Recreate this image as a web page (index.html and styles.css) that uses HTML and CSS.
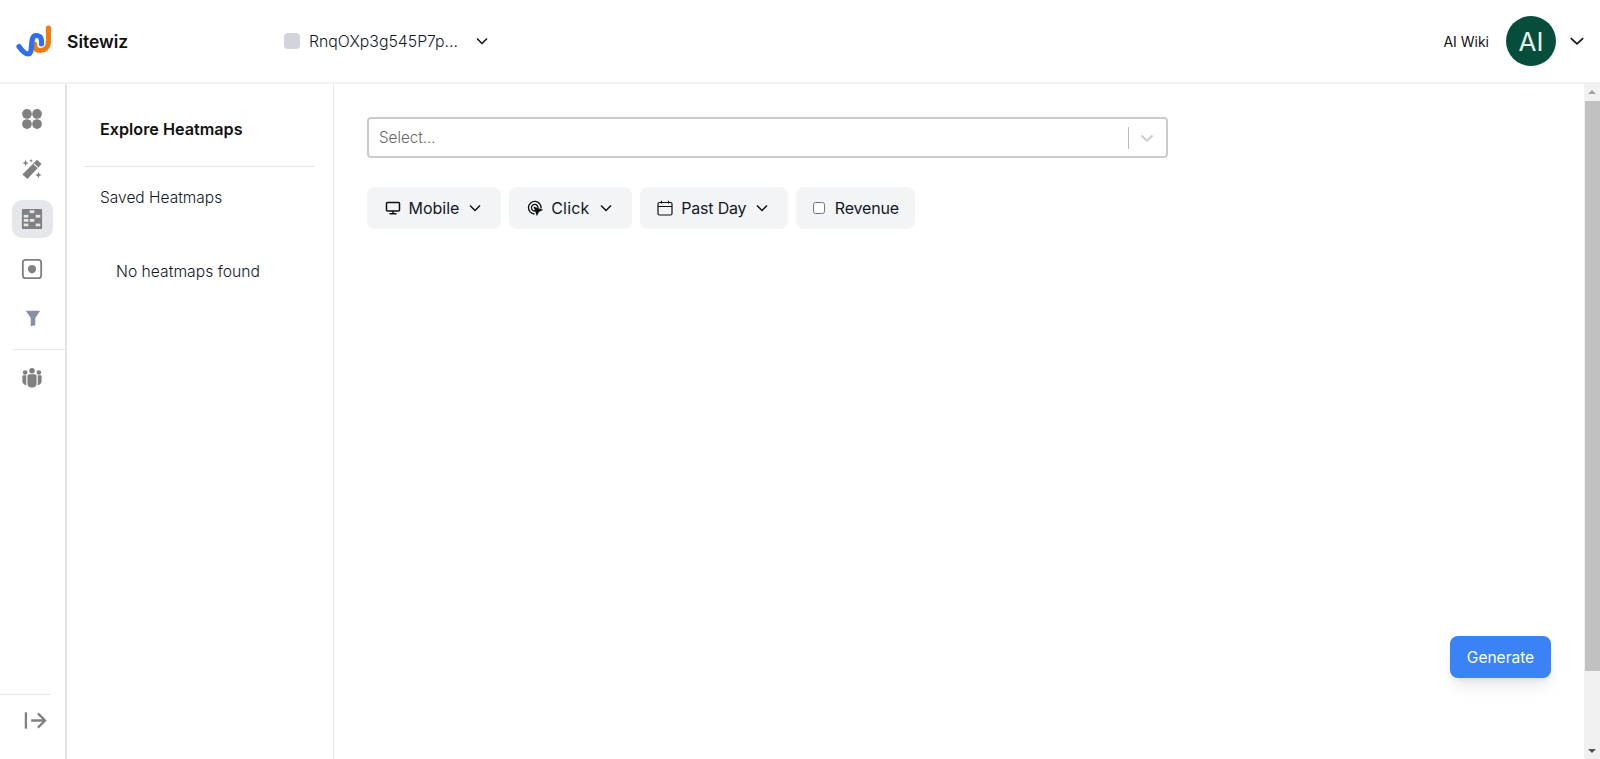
FILE: index.html
```html
<!DOCTYPE html>
<html lang="en">
<head>
<meta charset="utf-8">
<title>Sitewiz</title>
<link rel="stylesheet" href="styles.css">
</head>
<body>
<header class="topbar">
  <div class="brand">
    <svg class="logo" width="36" height="36" viewBox="0 0 36 36" fill="none" stroke-linecap="round">
      <path d="M19.500 21C19.500 26 22 27.500 25 27.500C32 27.500 33.500 23 33.500 17V5" stroke="#f07a0c" stroke-width="5.200"/>
      <path d="M4 23.500C6.500 27 9.500 31 13 31C19 31 14 12.500 21 12.500C26 12.500 27 16 26.500 21" stroke="#2f6fee" stroke-width="5.200"/>
    </svg>
    <span class="brand-name">Sitewiz</span>
  </div>
  <div class="site-picker">
    <span class="site-swatch"></span>
    <span class="site-name">RnqOXp3g545P7p...</span>
    <svg class="chev-dark" width="16" height="16" viewBox="0 0 16 16"><path d="M3 5.500 8 10.500 13 5.500" fill="none" stroke="#111" stroke-width="1.500"/></svg>
  </div>
  <div class="account">
    <span class="wiki">AI Wiki</span>
    <span class="avatar">AI</span>
    <svg class="chev-dark" width="18" height="18" viewBox="0 0 16 16"><path d="M2.500 5.500 8 10.500 13.500 5.500" fill="none" stroke="#111" stroke-width="1.500"/></svg>
  </div>
</header>
<div class="body-row">
  <nav class="rail">
    <div class="rail-group">
      <span class="rail-item">
        <svg width="24" height="24" viewBox="0 0 24 24" fill="#808080"><circle cx="6.500" cy="6.500" r="5.300"/><circle cx="17.500" cy="6.500" r="5.300"/><circle cx="6.500" cy="17.500" r="5.300"/><circle cx="17.500" cy="17.500" r="5.300"/></svg>
      </span>
      <span class="rail-item">
        <svg width="24" height="24" viewBox="0 0 24 24" fill="#808080"><path d="M17.500 2 22.500 6.500 7 23 1.500 18Z"/><path d="M14 6.500 18.500 10.500" stroke="#fff" stroke-width="1.200"/><path d="M5 2 6 4.500 8.500 5.500 6 6.500 5 9 4 6.500 1.500 5.500 4 4.500ZM19 15 20 17.500 22.500 18.500 20 19.500 19 22 18 19.500 15.500 18.500 18 17.500ZM11 1 11.700 2.500 13 3 11.700 3.500 11 5 10.300 3.500 9 3 10.300 2.500Z"/></svg>
      </span>
      <span class="rail-item rail-active">
        <svg width="24" height="24" viewBox="0 0 24 24"><rect x="1" y="1" width="22" height="22" rx="1" fill="#808080"/><g fill="#e5e7eb"><rect x="9.500" y="2.500" width="5" height="3"/><rect x="3" y="7.500" width="5" height="3"/><rect x="16" y="7.500" width="5" height="3"/><rect x="3" y="12" width="5" height="3"/><rect x="9.500" y="12" width="5" height="3"/><rect x="3" y="17" width="5" height="3"/><rect x="16" y="17" width="5" height="3"/></g></svg>
      </span>
      <span class="rail-item">
        <svg width="24" height="24" viewBox="0 0 24 24"><rect x="2" y="2" width="20" height="20" rx="3" fill="none" stroke="#808080" stroke-width="2"/><circle cx="12" cy="12" r="4.500" fill="#808080"/></svg>
      </span>
      <span class="rail-item rail-centered">
        <svg width="24" height="24" viewBox="0 0 24 24" fill="#8791a3"><path d="M5 4H19Q20 4 19.300 5L14.500 12V20L9.500 21V12L4.700 5Q4 4 5 4Z"/></svg>
      </span>
    </div>
    <div class="rail-rule"></div>
    <span class="rail-item">
      <svg width="24" height="24" viewBox="0 0 24 24" fill="#808080"><circle cx="12" cy="4" r="3"/><circle cx="4.500" cy="6" r="2.500"/><circle cx="19.500" cy="6" r="2.500"/><path d="M7 10Q7 8 9 8H15Q17 8 17 10V18Q17 22.500 12 22.500Q7 22.500 7 18Z"/><path d="M1.500 10Q1.500 9 2.500 9H5.700V18.500Q5.700 19.500 6 20.300Q1.500 19 1.500 15ZM22.500 10Q22.500 9 21.500 9H18.300V18.500Q18.300 19.500 18 20.300Q22.500 19 22.500 15Z"/></svg>
    </span>
    <div class="rail-foot">
      <div class="rail-rule"></div>
      <svg class="expand" width="23" height="23" viewBox="0 0 24 24" fill="none" stroke="#808080" stroke-width="2.400"><path d="M2 3.500V20.500"/><path d="M7.500 12H22M14.500 4.500 22 12 14.500 19.500"/></svg>
    </div>
  </nav>
  <aside class="panel">
    <div class="panel-title">Explore Heatmaps</div>
    <div class="panel-link">Saved Heatmaps</div>
    <div class="panel-empty">No heatmaps found</div>
  </aside>
  <main class="main">
    <div class="select-box">
      <span class="select-placeholder">Select...</span>
      <span class="select-sep"></span>
      <svg class="select-chev" width="20" height="20" viewBox="0 0 20 20"><path d="M4.500 7.500 10 12.800 15.500 7.500" fill="none" stroke="#ccc" stroke-width="2"/></svg>
    </div>
    <div class="filters">
      <button class="filter">
        <svg width="16" height="16" viewBox="0 0 16 16" fill="none" stroke="#111" stroke-width="1.500"><rect x="1.500" y="2.500" width="13" height="8.500" rx="1"/><path d="M8 11V13.500M4.500 13.800H11.500"/></svg>
        <span>Mobile</span>
        <svg width="16" height="16" viewBox="0 0 16 16"><path d="M3 5.500 8 10.500 13 5.500" fill="none" stroke="#111" stroke-width="1.500"/></svg>
      </button>
      <button class="filter filter-click">
        <svg width="16" height="16" viewBox="0 0 16 16" fill="none" stroke="#111" stroke-width="1.300"><path d="M14 8.500A6.300 6.300 0 1 0 7.500 14"/><path d="M11 8A3.300 3.300 0 1 0 8 11"/><path d="M7.500 7.500 14.500 10 11.500 11.500 10 14.500Z" fill="#111"/></svg>
        <span class="wide">Click</span>
        <svg width="16" height="16" viewBox="0 0 16 16"><path d="M3 5.500 8 10.500 13 5.500" fill="none" stroke="#111" stroke-width="1.500"/></svg>
      </button>
      <button class="filter">
        <svg width="16" height="16" viewBox="0 0 16 16" fill="none" stroke="#111" stroke-width="1.200"><rect x="1" y="2.500" width="14" height="12.500" rx="1.500"/><path d="M1 6.500H15M4.500 .8V3.500M11.500 .8V3.500"/></svg>
        <span class="tight">Past Day</span>
        <svg width="16" height="16" viewBox="0 0 16 16"><path d="M3 5.500 8 10.500 13 5.500" fill="none" stroke="#111" stroke-width="1.500"/></svg>
      </button>
      <button class="filter filter-check">
        <span class="checkbox"></span>
        <span class="tight">Revenue</span>
      </button>
    </div>
    <button class="generate">Generate</button>
  </main>
  <div class="scrollbar">
    <span class="arrow-up"></span>
    <span class="thumb"></span>
    <span class="arrow-down"></span>
  </div>
</div>
</body>
</html>
```
FILE: styles.css
```css
* { box-sizing: border-box; }
html, body { margin: 0; height: 100%; overflow: hidden; }
body {
  display: flex;
  flex-direction: column;
  height: 759px;
  background: #fff;
  color: #111827;
  font-family: "Inter", "Liberation Sans", sans-serif;
}
.topbar {
  height: 84px;
  flex: none;
  display: flex;
  align-items: center;
  border-bottom: 2px solid #f0f1f3;
  padding: 0 14px 0 15px;
}
.brand { width: 269px; display: flex; align-items: center; gap: 16px; }
.logo { flex: none; }
.brand-name { font-size: 17.500px; font-weight: 600; color: #111; }
.site-picker { display: flex; align-items: center; }
.site-swatch { width: 16px; height: 16px; border-radius: 4px; background: #d1d5db; margin-right: 9px; }
.site-name { font-size: 15.800px; font-weight: 300; color: #111827; width: 165px; white-space: nowrap; }
.account { margin-left: auto; display: flex; align-items: center; }
.wiki { font-size: 14px; color: #111; margin-right: 17px; }
.avatar {
  width: 50px; height: 50px; border-radius: 50%;
  background: #064e3b; color: #e5f0ec;
  display: flex; align-items: center; justify-content: center;
  font-size: 26px; margin-right: 12px;
}
.body-row { flex: 1; display: flex; min-height: 0; }
.rail {
  width: 67px; flex: none;
  border-right: 2px solid #e2e2ea;
  padding: 16px 0 0 0;
  display: flex; flex-direction: column; align-items: flex-start;
}
.rail-group { display: flex; flex-direction: column; gap: 12px; }
.rail-item {
  width: 41px; height: 38px; margin-left: 12px;
  display: flex; align-items: center; justify-content: center;
  border-radius: 10px;
}
.rail-item svg { width: 22px; height: 22px; margin-right: 2px; }
.rail-item.rail-centered svg { margin: 0 0 3px 0; }
.rail-active { background: #e5e7eb; }
.rail-rule { width: 53px; margin: 11px 0 9px 13px; border-top: 1px solid #e5e7eb; }
.rail-foot { margin-top: auto; width: 100%; padding-bottom: 27px; }
.rail-foot .rail-rule { width: 50px; margin: 0 0 14px 0; }
.expand { display: block; margin-left: 24px; }
.panel { width: 267px; flex: none; border-right: 1px solid #e5e7eb; padding: 0 18px 0 17px; }
.panel-title {
  font-size: 16.200px; font-weight: 600; color: #111;
  padding: 36px 0 27px 16px; border-bottom: 1px solid #e5e7eb;
  line-height: 19px;
}
.panel-link { font-size: 15.500px; font-weight: 300; color: #111827; padding: 21px 0 0 16px; line-height: 19px; }
.panel-empty { font-size: 15.700px; font-weight: 300; color: #111827; padding: 55px 0 0 32px; line-height: 19px; }
.main { flex: 1; position: relative; padding: 33px 33px; min-width: 0; }
.select-box {
  width: 801px; height: 41px;
  border: 2px solid #cccccc; border-radius: 4px;
  display: flex; align-items: center;
  padding: 0 9px 0 10px;
}
.select-placeholder { flex: 1; font-size: 15.200px; color: #666; font-weight: 300; }
.select-sep { width: 1px; height: 22px; background: #bbb; margin-right: 8px; }
.select-chev { flex: none; }
.filters { display: flex; gap: 8px; margin-top: 29px; }
.filter {
  height: 42px; border: 0; border-radius: 8px; background: #f3f4f6;
  display: flex; align-items: center; gap: 8px; padding: 0 17.500px;
  font: 400 16px "Inter", "Liberation Sans", sans-serif; color: #111827;
}
.filter-click { padding: 0 18.250px; }
.tight { letter-spacing: -.2px; }
.wide { letter-spacing: .2px; }
.filter-check { gap: 10px; padding: 0 16px 0 17px; }
.checkbox {
  width: 12px; height: 12px; border: 1px solid #767676; border-radius: 2.500px; background: #fff;
}
.generate {
  position: absolute; right: 33px; top: 552px;
  width: 101px; height: 42px;
  border: 0; border-radius: 8px;
  background: #3b82f6; color: #fff;
  font: 400 15.500px "Inter", "Liberation Sans", sans-serif;
  box-shadow: 0 10px 15px -3px rgba(0,0,0,.1), 0 4px 6px -4px rgba(0,0,0,.1);
}
.scrollbar {
  width: 16px; flex: none; background: #f1f1f1;
  display: flex; flex-direction: column; align-items: center;
  position: relative;
}
.arrow-up { margin-top: 6px; border: 4px solid transparent; border-top: 0; border-bottom: 4px solid #a3a3a3; }
.thumb { position: absolute; top: 17px; left: 1px; width: 15px; height: 570px; background: #c1c1c1; }
.arrow-down { margin-top: auto; margin-bottom: 6px; border: 4px solid transparent; border-bottom: 0; border-top: 4px solid #505050; }
```
